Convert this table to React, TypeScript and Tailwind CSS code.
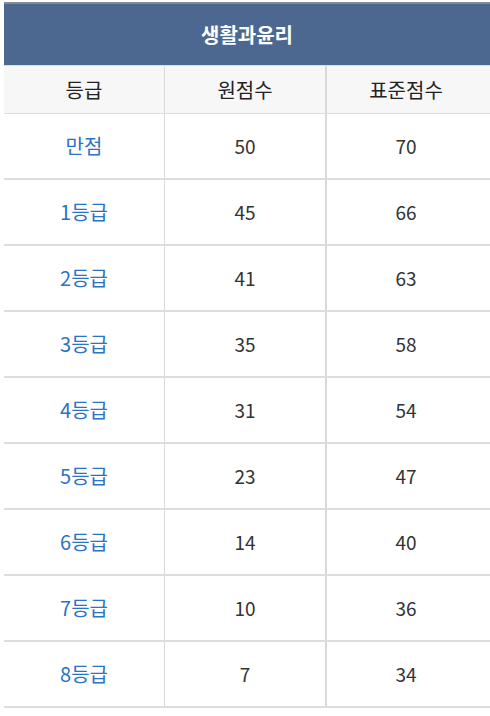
import { FC } from 'react';

const rows = [
    { grade: '만점', raw: 50, std: 70 },
    { grade: '1등급', raw: 45, std: 66 },
    { grade: '2등급', raw: 41, std: 63 },
    { grade: '3등급', raw: 35, std: 58 },
    { grade: '4등급', raw: 31, std: 54 },
    { grade: '5등급', raw: 23, std: 47 },
    { grade: '6등급', raw: 14, std: 40 },
    { grade: '7등급', raw: 10, std: 36 },
    { grade: '8등급', raw: 7, std: 34 },
];

const App: FC = () => {
    return (
        <div
            className="w-[490px] h-[716px] bg-white pl-[4px] pt-[2px] overflow-hidden"
            style={{ fontFamily: '"Noto Sans CJK KR", "Noto Sans", sans-serif' }}
        >
            <div className="border-t-2 border-[#8a8a8a]">
                {/* Title */}
                <div className="h-[61px] bg-[#4d6890] flex items-center justify-center">
                    <span className="text-white font-bold text-[20px]">생활과윤리</span>
                </div>

                {/* Column header */}
                <div className="flex h-[49px] bg-[#f7f7f7] border-t border-[#dddddd] border-b border-b-[#dddddd] text-[20px] text-[#222]">
                    <div className="w-[160px] flex items-center justify-center">등급</div>
                    <div className="w-[161px] flex items-center justify-center border-l border-[#d9d9d9]">원점수</div>
                    <div className="flex-1 flex items-center justify-center border-l-2 border-[#d9d9d9] pr-[5px]">표준점수</div>
                </div>

                {rows.map(r => (
                    <div key={r.grade} className="flex h-[66px] border-b-2 border-[#dddddd] text-[19px]">
                        <div className="w-[160px] flex items-center justify-center text-[#2b73c4] text-[20px]">{r.grade}</div>
                        <div className="w-[161px] flex items-center justify-center border-l border-[#d9d9d9] text-[#333]">{r.raw}</div>
                        <div className="flex-1 flex items-center justify-center border-l-2 border-[#d9d9d9] text-[#333] pr-[5px]">{r.std}</div>
                    </div>
                ))}
            </div>
        </div>
    );
};

export default App;
